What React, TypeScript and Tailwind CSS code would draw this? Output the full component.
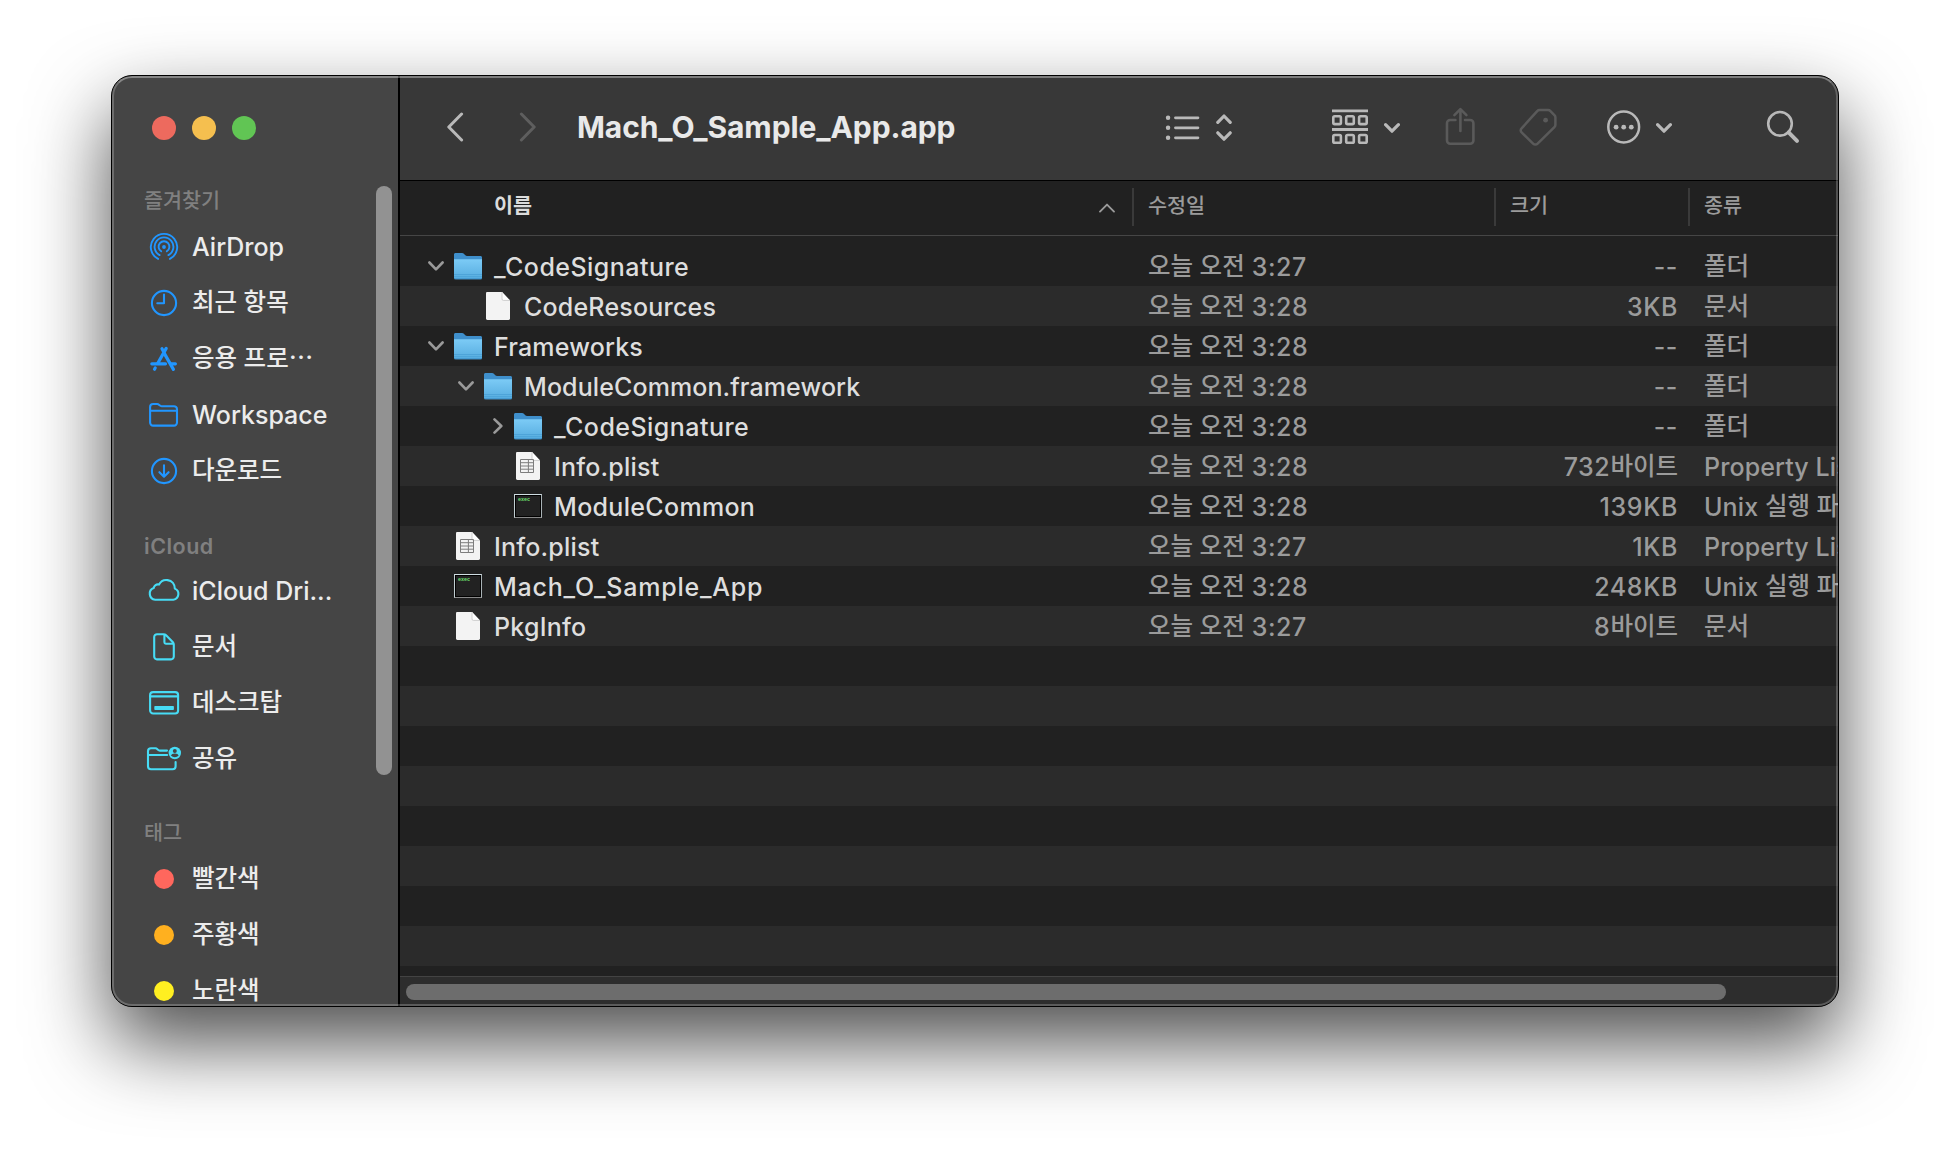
import React from "react";
import type { ReactNode } from "react";

type IconProps = { className?: string };

/* ---------- sidebar icons ---------- */

const line = {
  fill: "none",
  stroke: "currentColor",
  strokeLinecap: "round" as const,
  strokeLinejoin: "round" as const,
};

function Glyph({ children, w = 2.1 }: { children: ReactNode; w?: number }) {
  return (
    <svg viewBox="0 0 36 36" className="size-9 shrink-0" {...line} strokeWidth={w}>
      {children}
    </svg>
  );
}

const AirDrop = () => (
  <Glyph w={1.9}>
    <path d="M12.1 29.9A13.2 13.2 0 1 1 23.9 29.9" />
    <path d="M13.6 26.1A9.4 9.4 0 1 1 22.4 26.1" />
    <path d="M15.2 22.3A5.4 5.4 0 1 1 20.8 22.3" />
    <circle cx="18" cy="18" r="1.9" fill="currentColor" stroke="none" />
  </Glyph>
);
const Clock = () => (
  <Glyph>
    <circle cx="18" cy="18" r="12.1" />
    <path d="M18 9.6V18.2H11.3" />
  </Glyph>
);
const Apps = () => (
  <Glyph w={3.2}>
    <path d="M16 7.7L18.6 12.4M20.2 7.4L11.8 22.2" />
    <path d="M5.8 22.8H19.5M25.2 22.8H29.4" />
    <path d="M19 13.6L27.4 28.4" />
    <path d="M9.2 27L8.5 28.2" />
  </Glyph>
);
const Folder = () => (
  <Glyph>
    <path d="M4.1 10A3 3 0 0 1 7.1 7H11.2C13 7 13.6 9.2 15.6 9.2H28A3 3 0 0 1 31 12.2V25.6A3 3 0 0 1 28 28.6H7.1A3 3 0 0 1 4.1 25.6ZM4.1 13.7H31" />
  </Glyph>
);
const Download = () => (
  <Glyph>
    <circle cx="18" cy="18" r="12.1" />
    <path d="M18 12.2V23.4M13.4 19.2L18 23.7L22.6 19.2" />
  </Glyph>
);
const Cloud = () => (
  <Glyph>
    <path d="M9.2 26.7A6 6 0 0 1 7.7 15.1C7.9 12.4 10.6 10.8 13 11.6C14.8 8.1 18.2 6.6 21.6 7.1C26 7.8 28.8 11.4 28.8 15.6A5.8 5.8 0 0 1 27.4 26.7Z" />
  </Glyph>
);
const Doc = () => (
  <Glyph>
    <path d="M11 5.2H17.6C18.6 5.2 19.4 5.5 20.1 6.2L26.9 13.2C27.5 13.9 27.8 14.6 27.8 15.6V27.6A2.8 2.8 0 0 1 25 30.4H11A2.8 2.8 0 0 1 8.2 27.6V8A2.8 2.8 0 0 1 11 5.2ZM18.4 5.6V13.3A1.4 1.4 0 0 0 19.8 14.7H27.4" />
  </Glyph>
);
const Desktop = () => (
  <Glyph>
    <rect x="4.1" y="7.1" width="28" height="21.4" rx="3" />
    <path d="M4.1 11.4H32" />
    <rect x="8.3" y="20.9" width="19.6" height="4.2" rx="0.8" fill="currentColor" stroke="none" />
  </Glyph>
);
const Shared = () => (
  <Glyph>
    <path d="M21 9.6H13.9C11.9 9.6 11.4 7.3 9.5 7.3H5A3 3 0 0 0 2 10.3V25.3A3 3 0 0 0 5 28.3H26.6A3 3 0 0 0 29.6 25.3V21M2 14H21.2" />
    <circle cx="28.8" cy="12" r="6.2" fill="currentColor" stroke="none" />
    <circle cx="28.8" cy="9.9" r="2" fill="#454545" stroke="none" />
    <path d="M24.9 14.6A4 2.6 0 0 1 32.7 14.6A5.5 5.5 0 0 1 24.9 14.6Z" fill="#454545" stroke="none" />
  </Glyph>
);
const Tag = ({ color }: { color: string }) => (
  <span className="flex size-9 shrink-0 items-center justify-center">
    <span className={`size-5 rounded-full ${color}`} />
  </span>
);

/* ---------- list icons ---------- */

const FolderIcon = () => (
  <svg viewBox="0 0 32 32" className="size-8">
    <defs>
      <linearGradient id="folderFront" x1="0" y1="0" x2="0" y2="1">
        <stop offset="0" stopColor="#7ccbf6" />
        <stop offset="1" stopColor="#56acdf" />
      </linearGradient>
    </defs>
    <path d="M2 4.6C2 3.6 2.6 3 3.6 3H10.2C12.4 3 12.8 6 15 6H28.4C29.4 6 30 6.6 30 7.6V20H2Z" fill="#3f8fcb" />
    <path d="M2 9.2H30V27.6C30 28.6 29.4 29.2 28.4 29.2H3.6C2.6 29.2 2 28.6 2 27.6Z" fill="url(#folderFront)" />
    <path d="M2 24.5H30M2 26.6H30" stroke="#4a9fd6" strokeWidth="0.8" />
    <path d="M2.2 28.8H29.8" stroke="#3d8fc8" strokeWidth="0.9" />
  </svg>
);

const DocIcon = ({ table }: { table?: boolean }) => (
  <svg viewBox="0 0 32 32" className="size-8">
    <path d="M5.4 2H20L28 10.4V28.6C28 29.5 27.5 30 26.6 30H5.4C4.5 30 4 29.5 4 28.6V3.4C4 2.5 4.5 2 5.4 2Z" fill="#f3f3f3" />
    <path d="M20 2V9A1.4 1.4 0 0 0 21.4 10.4H28Z" fill="#fff" />
    <path d="M20 2V9A1.4 1.4 0 0 0 21.4 10.4H28" fill="none" stroke="#c4c4c4" strokeWidth="0.8" />
    {table && (
      <path d="M8.5 9.5H21.5V22.5H8.5ZM8.5 12.7H21.5M8.5 16H21.5M8.5 19.2H21.5M16.4 9.5V22.5" fill="none" stroke="#7d7d7d" strokeWidth="1" />
    )}
  </svg>
);

const ExecIcon = () => (
  <span className="mx-0.5 flex h-6 w-7 border border-t-[#cfdde2] border-r-[#a9b3b6] border-b-[#8a8a8a] border-l-[#c2ced2] bg-[#222] shadow-[inset_0_0_0_1px_#000]">
    <span className="mt-[2px] ml-[3px] font-['Liberation_Mono'] text-[5px] leading-[6px] font-bold text-[#6fe06f]">exec</span>
  </span>
);

const ChevronDown = ({ className }: IconProps) => (
  <svg viewBox="0 0 16 10" className={className} {...line} strokeWidth={3.2}>
    <path d="M1.6 1.7L8 8.2L14.4 1.7" />
  </svg>
);

/* ---------- sidebar ---------- */

function SideItem({ icon, children, hangul }: { icon: ReactNode; children: ReactNode; hangul?: boolean }) {
  return (
    <li className="flex h-14 items-center gap-2.5 pl-[34px]">
      {icon}
      <span
        className={
          hangul
            ? "pb-0.5 text-[24.5px] leading-8 font-medium whitespace-pre text-[#ececec]"
            : "text-[25px] leading-8 font-[450] whitespace-pre text-[#ececec]"
        }
      >
        {children}
      </span>
    </li>
  );
}

function Sidebar() {
  return (
    <aside className="flex w-[288px] shrink-0 flex-col border-r-2 border-black bg-[#454545]">
      <div className="flex gap-4 pt-10 pl-10">
        <span className="size-6 rounded-full bg-[#ed6a5e]" />
        <span className="size-6 rounded-full bg-[#f5bf4f]" />
        <span className="size-6 rounded-full bg-[#61c554]" />
      </div>
      <div className="flex min-h-0 flex-1 pt-[41px]">
        <nav className="min-w-0 flex-1 overflow-hidden">
          <h2 className="flex h-[38px] items-center pt-px pl-8 text-[20.7px] font-medium text-[#808080]">즐겨찾기</h2>
          <ul className="text-[#2196ff]">
            <SideItem icon={<AirDrop />}>AirDrop</SideItem>
            <SideItem icon={<Clock />} hangul>최근 항목</SideItem>
            <SideItem icon={<Apps />} hangul>응용 프로⋯</SideItem>
            <SideItem icon={<Folder />}>Workspace</SideItem>
            <SideItem icon={<Download />} hangul>다운로드</SideItem>
          </ul>
          <h2 className="mt-[30px] flex h-[34px] items-center pl-8 text-[21.5px] font-semibold tracking-[0.5px] text-[#808080]">iCloud</h2>
          <ul className="text-[#47dcf5]">
            <SideItem icon={<Cloud />}>iCloud Dri...</SideItem>
            <SideItem icon={<Doc />} hangul>문서</SideItem>
            <SideItem icon={<Desktop />} hangul>데스크탑</SideItem>
            <SideItem icon={<Shared />} hangul>공유</SideItem>
          </ul>
          <h2 className="mt-[26px] flex h-[38px] items-center pt-px pl-8 text-[20.7px] font-medium text-[#808080]">태그</h2>
          <ul>
            <SideItem icon={<Tag color="bg-[#ff675d]" />} hangul>빨간색</SideItem>
            <SideItem icon={<Tag color="bg-[#ffb01f]" />} hangul>주황색</SideItem>
            <SideItem icon={<Tag color="bg-[#ffef21]" />} hangul>노란색</SideItem>
          </ul>
        </nav>
        <span className="mt-[5px] mr-1.5 h-[589px] w-4 shrink-0 rounded-full bg-[#929292]" />
      </div>
    </aside>
  );
}

/* ---------- toolbar ---------- */

function Toolbar() {
  return (
    <header className="flex h-[105px] shrink-0 items-center border-b border-black bg-[#383838] pb-0.5 pl-[46px] text-[#b9b9b9]">
      <svg viewBox="0 0 18 30" className="h-[30px] w-[18px]" {...line} strokeWidth={3}>
        <path d="M15.6 2L2.8 15L15.6 28" />
      </svg>
      <svg viewBox="0 0 18 30" className="ml-[55px] h-[30px] w-[18px] text-[#5e5e5e]" {...line} strokeWidth={3}>
        <path d="M2.4 2L15.2 15L2.4 28" />
      </svg>
      <h1 className="ml-10 w-[587px] text-[30px] leading-9 font-bold tracking-[-0.08px] text-[#e9e9e9]">Mach_O_Sample_App.app</h1>
      <svg viewBox="0 0 36 30" className="h-[30px] w-9" {...line} strokeWidth={2.7}>
        <path d="M11.4 5.8H34M11.4 15.8H34M11.4 25.8H34" />
        <path d="M4 5.8H4.1M4 15.8H4.1M4 25.8H4.1" strokeWidth={4.4} />
      </svg>
      <svg viewBox="0 0 16 30" className="ml-4 h-[30px] w-4" {...line} strokeWidth={3.2}>
        <path d="M1.8 10.4L8 4L14.2 10.4M1.8 20.8L8 27.2L14.2 20.8" />
      </svg>
      <svg viewBox="0 0 36 36" className="ml-[100px] size-9" {...line} strokeWidth={2.6}>
        <path d="M0 1.8H36M0 20.5H36" strokeLinecap="butt" strokeWidth={2.8} />
        <rect x="1.3" y="7.3" width="7.6" height="7.8" rx="1.4" />
        <rect x="14.2" y="7.3" width="7.6" height="7.8" rx="1.4" />
        <rect x="27.1" y="7.3" width="7.6" height="7.8" rx="1.4" />
        <rect x="1.3" y="26" width="7.6" height="7.8" rx="1.4" />
        <rect x="14.2" y="26" width="7.6" height="7.8" rx="1.4" />
        <rect x="27.1" y="26" width="7.6" height="7.8" rx="1.4" />
      </svg>
      <ChevronDown className="mt-0.5 ml-4 h-2.5 w-4" />
      <svg viewBox="0 0 30 40" className="ml-[45px] h-10 w-[30px] text-[#5a5a5a]" {...line} strokeWidth={2.6}>
        <path d="M10.4 13H5.2A3.2 3.2 0 0 0 2 16.2V33.6A3.2 3.2 0 0 0 5.2 36.8H25.2A3.2 3.2 0 0 0 28.4 33.6V16.2A3.2 3.2 0 0 0 25.2 13H20" />
        <path d="M15.4 24V2.6M9.4 8.2L15.4 2.2L21.4 8.2" />
      </svg>
      <svg viewBox="0 0 38 38" className="ml-[44px] size-[38px] text-[#5a5a5a]" {...line} strokeWidth={2.5}>
        <path d="M20.6 2.1H29.2C30 2.1 30.6 2.3 31.2 2.9L35.6 7.4C36.2 8 36.4 8.6 36.4 9.4V16.8C36.4 17.8 36.1 18.5 35.4 19.2L18.6 35.6C17.3 36.9 15.4 36.9 14.1 35.6L2.6 24.4C1.4 23.2 1.4 21.6 2.6 20.4L18.2 3.1C18.9 2.4 19.6 2.1 20.6 2.1Z" />
        <circle cx="26.6" cy="12.2" r="2.4" fill="currentColor" stroke="none" />
      </svg>
      <svg viewBox="0 0 34 34" className="ml-[50px] size-[34px]" {...line} strokeWidth={2.5}>
        <circle cx="16.7" cy="17" r="15.4" />
        <g fill="currentColor" stroke="none">
          <circle cx="9.1" cy="17.2" r="2.4" />
          <circle cx="16.7" cy="17.2" r="2.4" />
          <circle cx="24.3" cy="17.2" r="2.4" />
        </g>
      </svg>
      <ChevronDown className="mt-0.5 ml-[15px] h-2.5 w-4" />
      <svg viewBox="0 0 34 34" className="ml-[94px] size-[34px]" {...line} strokeWidth={2.6}>
        <circle cx="14" cy="13.8" r="11.8" />
        <path d="M22.6 22.4L31 30.8" strokeWidth={4} />
      </svg>
    </header>
  );
}

/* ---------- file list ---------- */

type Kind = "folder" | "doc" | "plist" | "exec";
type Row = { name: string; level: number; icon: Kind; open?: boolean; time: string; size: string; kind: string; track: string };

const rows: Row[] = [
  { name: "_CodeSignature", level: 0, icon: "folder", open: true, time: "3:27", size: "--", kind: "폴더", track: "tracking-[0.46px]" },
  { name: "CodeResources", level: 1, icon: "doc", time: "3:28", size: "3KB", kind: "문서", track: "tracking-[0.2px]" },
  { name: "Frameworks", level: 0, icon: "folder", open: true, time: "3:28", size: "--", kind: "폴더", track: "tracking-[0.17px]" },
  { name: "ModuleCommon.framework", level: 1, icon: "folder", open: true, time: "3:28", size: "--", kind: "폴더", track: "tracking-[0.1px]" },
  { name: "_CodeSignature", level: 2, icon: "folder", open: false, time: "3:28", size: "--", kind: "폴더", track: "tracking-[0.46px]" },
  { name: "Info.plist", level: 2, icon: "plist", time: "3:28", size: "732바이트", kind: "Property List", track: "tracking-[0.2px]" },
  { name: "ModuleCommon", level: 2, icon: "exec", time: "3:28", size: "139KB", kind: "Unix 실행 파일", track: "tracking-[0.32px]" },
  { name: "Info.plist", level: 0, icon: "plist", time: "3:27", size: "1KB", kind: "Property List", track: "tracking-[0.2px]" },
  { name: "Mach_O_Sample_App", level: 0, icon: "exec", time: "3:28", size: "248KB", kind: "Unix 실행 파일", track: "tracking-[0.78px]" },
  { name: "PkgInfo", level: 0, icon: "doc", time: "3:27", size: "8바이트", kind: "문서", track: "tracking-[0.24px]" },
];

const indents = ["pl-6", "pl-[54px]", "pl-[84px]"];

/* Hangul runs are set slightly smaller than Latin ones. */
function Mixed({ text }: { text: string }) {
  return (
    <>
      {text.split(/([\uac00-\ud7a3]+(?: [\uac00-\ud7a3]+)*)/).map((part, i) =>
        i % 2 ? (
          <span key={i} className="relative -top-px text-[24.5px] font-medium tracking-normal">{part}</span>
        ) : (
          part
        ),
      )}
    </>
  );
}

function Disclosure({ open }: { open?: boolean }) {
  return (
    <span className="mr-2 flex w-6 justify-center text-[#9a9a9a]">
      {open === true && (
        <svg viewBox="0 0 16 10" className="h-2.5 w-4" {...line} strokeWidth={2.6}>
          <path d="M1.4 1.5L8 8.3L14.6 1.5" />
        </svg>
      )}
      {open === false && (
        <svg viewBox="0 0 10 16" className="ml-1 h-4 w-2.5" {...line} strokeWidth={2.6}>
          <path d="M1.5 1.4L8.3 8L1.5 14.6" />
        </svg>
      )}
    </span>
  );
}

function FileRow({ row }: { row: Row }) {
  return (
    <li className="flex h-10 shrink-0 items-center text-[25px] leading-[38px] font-[450] whitespace-pre text-[#9b9b9b] even:bg-[#2b2b2b]">
      <div className={`flex w-[748px] shrink-0 items-center ${indents[row.level]}`}>
        <Disclosure open={row.open} />
        <span className="-ml-1 mr-2.5 flex w-8 shrink-0">
          {row.icon === "folder" && <FolderIcon />}
          {row.icon === "doc" && <DocIcon />}
          {row.icon === "plist" && <DocIcon table />}
          {row.icon === "exec" && <ExecIcon />}
        </span>
        <span className={`pt-0.5 text-[#dedede] ${row.track}`}>{row.name}</span>
      </div>
      <span className="w-[346px] shrink-0 pt-0.5 tracking-[0.5px]">
        <Mixed text={`오늘 오전 ${row.time}`} />
      </span>
      <span className="w-[184px] shrink-0 pt-0.5 text-right tracking-[0.6px]">
        <Mixed text={row.size} />
      </span>
      <span className="ml-[26px] pt-0.5 tracking-[0.1px]">
        <Mixed text={row.kind} />
      </span>
    </li>
  );
}

function ListHeader() {
  return (
    <div className="flex h-[55px] shrink-0 items-start border-b border-[#464646] pt-[7px] text-[20.7px] leading-9 font-medium text-[#9b9b9b]">
      <div className="flex h-[38px] w-[734px] shrink-0 items-center border-r-2 border-[#3a3a3a] pr-4 pl-[94px]">
        <span className="flex-1 pb-0.5 font-bold text-[#dcdcdc]">이름</span>
        <svg viewBox="0 0 18 10" className="mt-0.5 h-2.5 w-[18px]" {...line} strokeWidth={1.9}>
          <path d="M2 8.6L9 1.6L16 8.6" />
        </svg>
      </div>
      <div className="h-[38px] w-[362px] shrink-0 border-r-2 border-[#3a3a3a] pl-3.5">수정일</div>
      <div className="h-[38px] w-[194px] shrink-0 border-r-2 border-[#3a3a3a] pl-3.5">크기</div>
      <div className="h-[38px] pl-3.5">종류</div>
    </div>
  );
}

export default function App() {
  return (
    <div className="h-[1154px] w-[1950px] overflow-hidden bg-white pt-[75px] pl-[111px] font-['Inter','Noto_Sans_CJK_KR',sans-serif]">
      <div className="relative flex h-[932px] w-[1728px] overflow-hidden rounded-[21px] border border-black bg-[#212121] shadow-[0_36px_80px_rgba(0,0,0,0.7)]">
        <Sidebar />
        <main className="flex min-w-0 flex-1 flex-col overflow-hidden">
          <Toolbar />
          <ListHeader />
          <ul className="mt-2.5 flex h-[730px] shrink-0 flex-col overflow-hidden">
            {rows.map((row, i) => (
              <FileRow key={i} row={row} />
            ))}
            {Array.from({ length: 9 }, (_, i) => (
              <li key={i} className="h-10 shrink-0 even:bg-[#2b2b2b]" />
            ))}
          </ul>
          <div className="flex-1 border-t border-[#434343] bg-[#2d2d2d] pt-[7px] pl-1.5">
            <span className="block h-4 w-[1320px] rounded-full bg-[#6d6d6d]" />
          </div>
        </main>
        <span className="pointer-events-none absolute inset-0 rounded-[20px] border-2 border-t-white/35 border-r-white/22 border-b-white/22 border-l-white/22" />
      </div>
    </div>
  );
}
